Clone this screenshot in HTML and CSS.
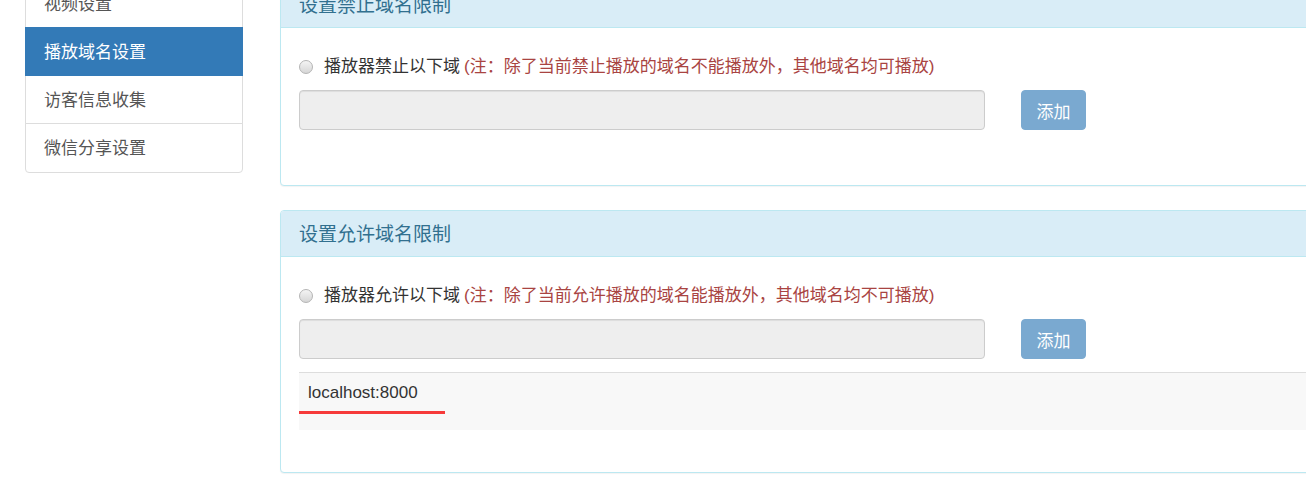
FILE: index.html
```html
<!DOCTYPE html>
<html lang="zh-CN">
<head>
    <meta charset="UTF-8">
    <meta name="viewport" content="width=device-width, initial-scale=1.0">
    <title>播放域名设置</title>
    <link rel="stylesheet" href="styles.css">
</head>
<body>
    <div class="page">
        <div class="side-nav">
            <a class="nav-item" href="#">视频设置</a>
            <a class="nav-item active" href="#">播放域名设置</a>
            <a class="nav-item" href="#">访客信息收集</a>
            <a class="nav-item" href="#">微信分享设置</a>
        </div>

        <div class="main">
            <div class="panel">
                <div class="panel-heading">设置禁止域名限制</div>
                <div class="panel-body">
                    <label class="radio-row">
                        <span class="radio"></span>
                        <span class="radio-text">播放器禁止以下域</span>
                        <span class="note">(注：除了当前禁止播放的域名不能播放外，其他域名均可播放)</span>
                    </label>
                    <div class="add-row">
                        <input class="domain-input" type="text" disabled>
                        <button class="btn-add" disabled>添加</button>
                    </div>
                    <ul class="domain-list"></ul>
                </div>
            </div>

            <div class="panel">
                <div class="panel-heading">设置允许域名限制</div>
                <div class="panel-body">
                    <label class="radio-row">
                        <span class="radio"></span>
                        <span class="radio-text">播放器允许以下域</span>
                        <span class="note">(注：除了当前允许播放的域名能播放外，其他域名均不可播放)</span>
                    </label>
                    <div class="add-row">
                        <input class="domain-input" type="text" disabled>
                        <button class="btn-add" disabled>添加</button>
                    </div>
                    <ul class="domain-list">
                        <li class="domain-item">
                            <span class="domain-name">localhost:8000</span>
                            <div class="mark"></div>
                        </li>
                    </ul>
                </div>
            </div>
        </div>
    </div>
</body>
</html>
```

FILE: styles.css
```css
body {
    margin: 0;
    background: #fff;
    font-family: "Liberation Sans", "Noto Sans CJK SC", sans-serif;
    font-size: 17px;
    color: #333;
    overflow: hidden;
}

.page {
    display: flex;
    align-items: flex-start;
    padding-left: 25px;
    margin-top: -21px;
}

/* sidebar */
.side-nav {
    width: 218px;
    flex-shrink: 0;
    display: flex;
    flex-direction: column;
}

.nav-item {
    display: block;
    padding: 13px 18px 11px;
    line-height: 23px;
    border: 1px solid #ddd;
    margin-bottom: -1px;
    background: #fff;
    color: #555;
    text-decoration: none;
}

.nav-item:first-child {
    border-radius: 4px 4px 0 0;
}

.nav-item:last-child {
    border-radius: 0 0 4px 4px;
    margin-bottom: 0;
    padding-bottom: 12px;
}

.nav-item.active {
    background: #337ab7;
    border-color: #337ab7;
    color: #fff;
    position: relative;
}

/* panels */
.main {
    margin-left: 37px;
    margin-top: 2px;
    width: 1100px;
    flex-shrink: 0;
}

.panel {
    border: 1px solid #bce8f1;
    border-radius: 4px;
    background: #fff;
    margin-bottom: 24px;
    box-shadow: 0 1px 1px rgba(0, 0, 0, 0.05);
}

.panel-heading {
    background: #d9edf7;
    color: #31708f;
    border-bottom: 1px solid #bce8f1;
    padding: 12px 18px 10px;
    line-height: 23px;
    font-size: 19px;
    border-radius: 3px 3px 0 0;
}

.panel-body {
    padding: 19px 18px 42px;
}

.radio-row {
    display: flex;
    align-items: center;
    margin-top: 7px;
    line-height: 25px;
}

.radio {
    width: 12px;
    height: 12px;
    border: 1px solid #b4b4b4;
    border-radius: 50%;
    background: linear-gradient(#f4f4f4, #d6d6d6);
    margin-right: 11px;
}

.radio-text {
    margin-right: 4px;
}

.note {
    color: #a94442;
}

.add-row {
    display: flex;
    align-items: center;
    margin-top: 11px;
}

.domain-input {
    width: 686px;
    height: 40px;
    box-sizing: border-box;
    border: 1px solid #ccc;
    border-radius: 4px;
    background: #eee;
    box-shadow: inset 0 1px 1px rgba(0, 0, 0, 0.075);
    margin: 0;
}

.btn-add {
    margin-left: 36px;
    width: 65px;
    height: 40px;
    border: 1px solid #7aa9d0;
    border-radius: 4px;
    background: #7aa9d0;
    color: #fff;
    font-family: "Liberation Sans", "Noto Sans CJK SC", sans-serif;
    font-size: 17px;
    padding: 0;
}

.domain-list {
    list-style: none;
    margin: 13px 0 0;
    padding: 0;
}

.domain-item {
    border-top: 1px solid #ddd;
    background: #f8f8f8;
    padding: 8px 0 16px;
}

.domain-name {
    display: block;
    padding-left: 9px;
    line-height: 24px;
    font-size: 17px;
    color: #333;
}

.mark {
    width: 146px;
    height: 3px;
    background: #f63a3a;
    margin-top: 6px;
}
```
